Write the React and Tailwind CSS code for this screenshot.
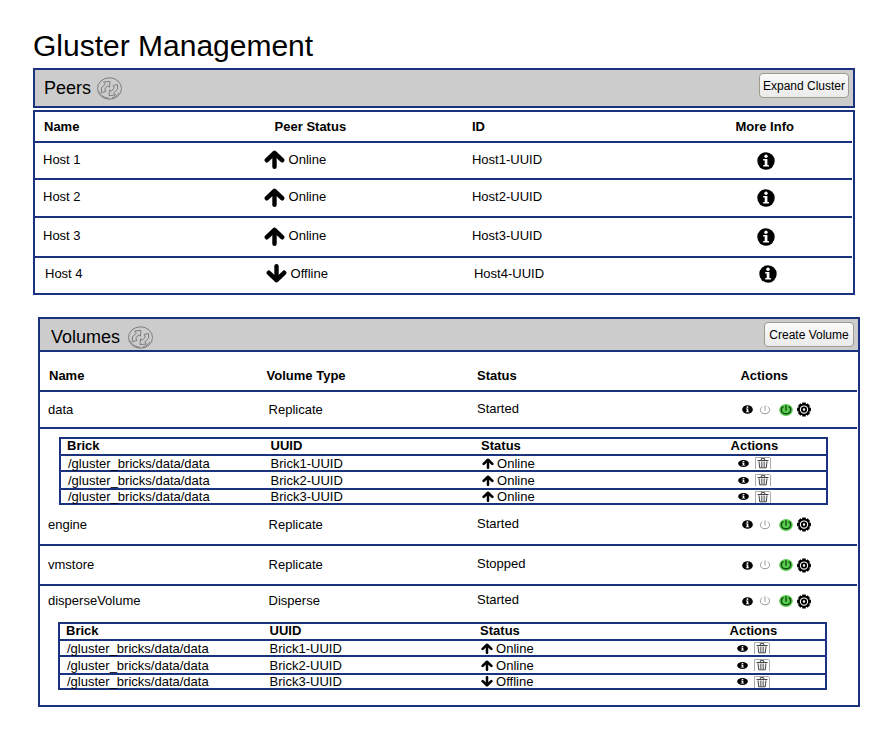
import React from "react";
import clsx from "clsx";

const peers = [
  { name: "Host 1", online: true, id: "Host1-UUID", row: "h-[37px]" },
  { name: "Host 2", online: true, id: "Host2-UUID", row: "h-[38px]" },
  { name: "Host 3", online: true, id: "Host3-UUID", row: "h-[40px]" },
  { name: "Host 4", online: false, id: "Host4-UUID", row: "h-[35px]" },
];

const bricks = (lastOnline) => [
  { path: "/gluster_bricks/data/data", uuid: "Brick1-UUID", online: true, row: "h-[16px]" },
  { path: "/gluster_bricks/data/data", uuid: "Brick2-UUID", online: true, row: "h-[18px]" },
  { path: "/gluster_bricks/data/data", uuid: "Brick3-UUID", online: lastOnline, row: "h-[13px]" },
];

const volumes = [
  { name: "data", type: "Replicate", status: "Started", row: "h-[37px]", line: true, bricks: bricks(true), inset: "pl-[19px] pr-[29px] pt-[8px]" },
  { name: "engine", type: "Replicate", status: "Started", row: "h-[41px]", line: true },
  { name: "vmstore", type: "Replicate", status: "Stopped", row: "h-[40px]", line: true },
  { name: "disperseVolume", type: "Disperse", status: "Started", row: "h-[30px]", line: false, bricks: bricks(false), inset: "pl-[18px] pr-[30px] pt-[6px] pb-[15px]" },
];

const line = "border-b-2 border-[#1b3281]";

function Arrow({ up, className }) {
  return (
    <svg viewBox="0 0 21 19" className={clsx("shrink-0", !up && "rotate-180", className)} fill="none" stroke="#000" strokeLinecap="round" aria-hidden="true">
      <path d="M10.5 16.8V4" strokeWidth="4.4" />
      <path d="M2.900 10.200 10.500 3l7.600 7.200" strokeWidth="4.6" strokeLinejoin="round" />
    </svg>
  );
}

function InfoIcon({ className }) {
  return (
    <svg viewBox="0 0 18 18" preserveAspectRatio="none" className={clsx("block", className)} aria-hidden="true">
      <circle cx="9" cy="9" r="8.7" fill="#000" />
      <circle cx="9" cy="4.2" r="1.7" fill="#fff" />
      <path d="M6.2 7h4.2v6h1.5v1.4H6.2V13h1.5V8.4H6.2z" fill="#fff" />
    </svg>
  );
}

function PowerGlyph({ stroke, width }) {
  return (
    <g fill="none" stroke={stroke} strokeWidth={width} strokeLinecap="round">
      <path d="M7 1.8v4.4" />
      <path d="M4 2.9C1.300 4.400 1.600 9.700 7 9.700s5.700-5.300 3-6.800" />
    </g>
  );
}

function RefreshIcon() {
  return (
    <svg viewBox="0 0 25 23" className="block h-[23px] w-[25px]" fill="none" stroke="#747474" strokeLinejoin="round" aria-hidden="true">
      <ellipse cx="12.5" cy="11.5" rx="12" ry="10.7" strokeWidth="0.9" />
      <path d="M2.200 14.500c1.600 4 5.400 6.500 10 6.600M15 20.800c3-.7 5.400-2.500 6.900-5.200" strokeWidth="0.8" />
      <path d="M4.600 15.500 4.300 11 8.300 7 6.600 5l6.400-.6-.6 5.800-1.700-1.500-2.900 3.300 1 2.600z" strokeWidth="0.9" />
      <path d="M20.400 7.500l.3 4.500-4 4 1.700 2-6.400.6.600-5.800 1.700 1.500 2.900-3.300-1-2.600z" strokeWidth="0.9" />
    </svg>
  );
}

function GearIcon() {
  return (
    <svg viewBox="0 0 16 16" className="block h-[15px] w-[16px]" aria-hidden="true">
      <path d="M8 .6v14.8M.6 8h14.800M2.800 2.800l10.400 10.400M13.200 2.800 2.800 13.200" stroke="#000" strokeWidth="3.8" />
      <circle cx="8" cy="8" r="5.400" fill="#fff" stroke="#000" strokeWidth="2" />
      <circle cx="8" cy="8" r="2.300" fill="#fff" stroke="#000" strokeWidth="2" />
    </svg>
  );
}

function TrashIcon() {
  return (
    <svg viewBox="0 0 16 12" className="block h-[12px] w-[16px]" fill="none" aria-hidden="true">
      <path d="M.5 12V.5H15M15.500 1v11" stroke="#aaa" />
      <path d="M2.500 3.500h11M6.300 3V1.600h3.400V3" stroke="#444" />
      <path d="M4 4.300l.7 6.500h6.600l.7-6.500" stroke="#444" />
      <path d="M6.400 4.500v5.800M8 4.500v5.800M9.600 4.500v5.800" stroke="#555" strokeWidth="0.8" />
    </svg>
  );
}

function IconButton({ label, className, children }) {
  return (
    <button type="button" aria-label={label} className={clsx("block shrink-0", className)}>
      {children}
    </button>
  );
}

function PanelHeader({ title, action, className, titleClass }) {
  return (
    <div className={clsx("flex items-start justify-between bg-[#cccccc] pt-[3px] pr-[4px]", className)}>
      <div className={clsx("flex items-center", titleClass)}>
        <h2 className="text-[18px] leading-[26px]">{title}</h2>
        <IconButton label={"Refresh " + title}>
          <RefreshIcon />
        </IconButton>
      </div>
      <button type="button" className="h-[25px] w-[90px] rounded-[4px] border border-[#a39a8f] bg-linear-to-b from-[#fafafa] to-[#ebebeb] text-center text-[12px] leading-[22px] whitespace-nowrap">
        {action}
      </button>
    </div>
  );
}

function PeersTable() {
  return (
    <div className="mt-[2px] border-2 border-[#1b3281] pr-px">
      <table className="w-full table-fixed border-separate border-spacing-0 text-left">
        <thead>
          <tr className="h-[31px]">
            <th className={clsx(line, "w-[27%] pl-[9px]")}>Name</th>
            <th className={clsx(line, "w-[26%] pl-[19px]")}>Peer Status</th>
            <th className={clsx(line, "w-[32%] pl-[4px]")}>ID</th>
            <th className={clsx(line, "pl-[6px]")}>More Info</th>
          </tr>
        </thead>
        <tbody>
          {peers.map((p, i) => {
            const last = i === peers.length - 1;
            const b = last ? "pb-[4px]" : clsx(line, "pb-[2px]");
            return (
              <tr key={p.name} className={p.row}>
                <td className={clsx(b, last ? "pl-[10px]" : "pl-[8px]")}>{p.name}</td>
                <td className={clsx(b, last ? "pl-[10px]" : "pl-[8px]")}>
                  <div className="flex items-center gap-[4px]">
                    <Arrow up={p.online} className="h-[19px] w-[21px]" />
                    {p.online ? "Online" : "Offline"}
                  </div>
                </td>
                <td className={clsx(b, last ? "pl-[6px]" : "pl-[4px]")}>{p.id}</td>
                <td className={clsx(!last && line, last ? "pb-[4px] pl-[30px]" : "pl-[28px]")}>
                  <IconButton label={"More info on " + p.name}>
                    <InfoIcon className="h-[18px] w-[18px]" />
                  </IconButton>
                </td>
              </tr>
            );
          })}
        </tbody>
      </table>
    </div>
  );
}

function BrickTable({ rows }) {
  return (
    <div className="border-2 border-[#1b3281]">
      <table className="w-full table-fixed border-separate border-spacing-0 text-left leading-[13px]">
        <thead>
          <tr className="h-[17px]">
            <th className={clsx(line, "w-[27%] pb-[2px] pl-[6px]")}>Brick</th>
            <th className={clsx(line, "w-[27%] pb-[2px] pl-[3px]")}>UUID</th>
            <th className={clsx(line, "w-[33%] pb-[2px] pl-[7px]")}>Status</th>
            <th className={clsx(line, "pb-[2px] pl-[4px]")}>Actions</th>
          </tr>
        </thead>
        <tbody>
          {rows.map((r, i) => {
            const b = i < rows.length - 1 && line;
            return (
              <tr key={r.uuid} className={r.row}>
                <td className={clsx(b, "pl-[7px]")}>{r.path}</td>
                <td className={clsx(b, "pl-[3px]")}>{r.uuid}</td>
                <td className={clsx(b, "pl-[8px]")}>
                  <div className="flex items-center gap-[3px]">
                    <Arrow up={r.online} className="h-[11px] w-[12px]" />
                    {r.online ? "Online" : "Offline"}
                  </div>
                </td>
                <td className={clsx(b, "pl-[11px]")}>
                  <div className="flex items-center gap-[6px]">
                    <IconButton label={"Info on " + r.uuid}>
                      <InfoIcon className="h-[7px] w-[11px]" />
                    </IconButton>
                    <IconButton label={"Delete " + r.uuid}>
                      <TrashIcon />
                    </IconButton>
                  </div>
                </td>
              </tr>
            );
          })}
        </tbody>
      </table>
    </div>
  );
}

function VolumeActions({ name }) {
  return (
    <div className="flex items-center">
      <IconButton label={"Info on " + name}>
        <InfoIcon className="h-[9px] w-[11px]" />
      </IconButton>
      <IconButton label={"Stop " + name} className="ml-[5px]">
        <svg viewBox="0 0 14 12" className="block h-[12px] w-[14px]" aria-hidden="true">
          <PowerGlyph stroke="#999" width="1" />
        </svg>
      </IconButton>
      <IconButton label={"Start " + name} className="ml-[7px]">
        <svg viewBox="0 0 14 12" className="block h-[12px] w-[14px]" aria-hidden="true">
          <ellipse cx="7" cy="6" rx="6.8" ry="5.900" fill="#55cf4c" />
          <PowerGlyph stroke="#174a17" width="1.4" />
        </svg>
      </IconButton>
      <IconButton label={"Settings of " + name} className="ml-[3px]">
        <GearIcon />
      </IconButton>
    </div>
  );
}

function VolumesTable() {
  return (
    <div className="pr-px">
      <table className="w-full table-fixed border-separate border-spacing-0 text-left">
        <thead>
          <tr className="h-[40px]">
            <th className={clsx(line, "w-[27%] pt-[10px] pl-[9px]")}>Name</th>
            <th className={clsx(line, "w-[26%] pt-[10px] pl-[6px]")}>Volume Type</th>
            <th className={clsx(line, "w-[32%] pt-[10px] pl-[4px]")}>Status</th>
            <th className={clsx(line, "pt-[10px] pl-[6px]")}>Actions</th>
          </tr>
        </thead>
        <tbody>
          {volumes.map((v) => {
            const b = v.line && line;
            return (
              <React.Fragment key={v.name}>
                <tr className={v.row}>
                  <td className={clsx(b, "pl-[8px]")}>{v.name}</td>
                  <td className={clsx(b, "pl-[8px]")}>{v.type}</td>
                  <td className={clsx(b, "pb-[2px] pl-[4px]")}>{v.status}</td>
                  <td className={clsx(b, "pl-[8px]")}>
                    <VolumeActions name={v.name} />
                  </td>
                </tr>
                {v.bricks && (
                  <tr>
                    <td colSpan={4} className={v.inset}>
                      <BrickTable rows={v.bricks} />
                    </td>
                  </tr>
                )}
              </React.Fragment>
            );
          })}
        </tbody>
      </table>
    </div>
  );
}

export default function App() {
  return (
    <main className="min-h-screen bg-white pt-[26px] pb-[33px] font-['Liberation_Sans',Arial,sans-serif] text-[13px] leading-[16px] text-black">
      <section className="pr-[30px] pl-[33px]">
        <h1 className="mb-[2px] text-[30px] leading-[40px]">Gluster Management</h1>
        <PanelHeader title="Peers" action="Expand Cluster" className="h-[40px] border-2 border-[#1b3281] pl-[9px]" titleClass="gap-[6px] pt-[2px]" />
        <PeersTable />
      </section>
      <section className="mt-[22px] pr-[25px] pl-[38px]">
        <div className="border-2 border-[#1b3281]">
          <PanelHeader title="Volumes" action="Create Volume" className="h-[33px] border-b-2 border-[#1b3281] pl-[11px]" titleClass="gap-[8px] pt-[2px]" />
          <VolumesTable />
        </div>
      </section>
    </main>
  );
}
